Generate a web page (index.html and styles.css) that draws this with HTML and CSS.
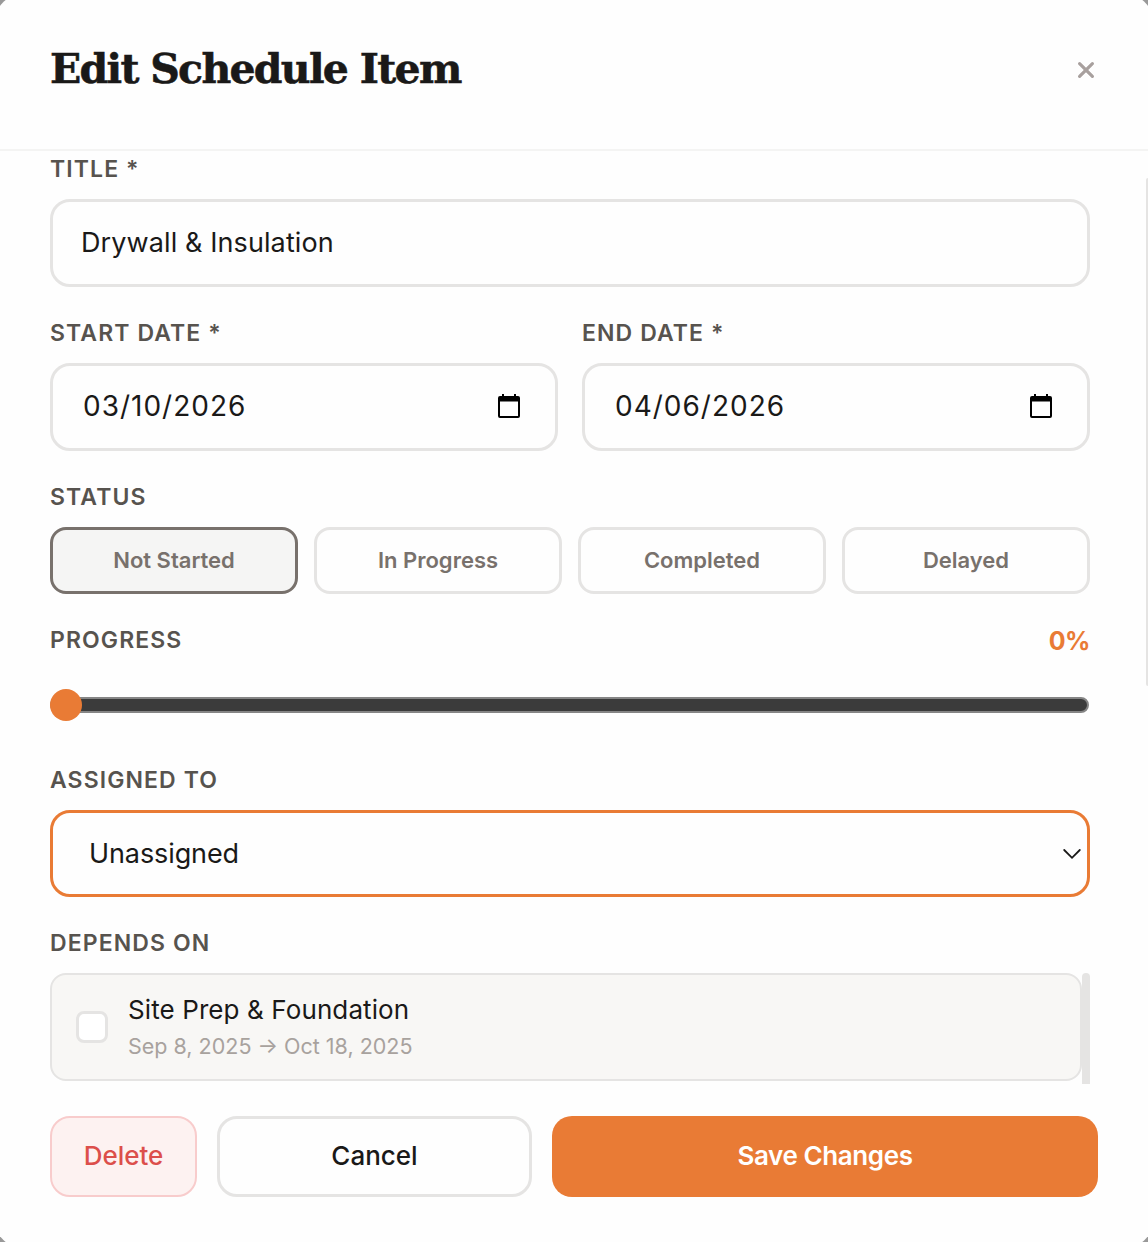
FILE: index.html
```
<!DOCTYPE html>
<html lang="en">
<head>
    <meta charset="UTF-8">
    <meta name="viewport" content="width=device-width, initial-scale=1.0">
    <title>Edit Schedule Item</title>
    <link rel="stylesheet" href="styles.css">
</head>
<body>
    <div class="modal">
        <div class="modal-header">
            <h2>Edit Schedule Item</h2>
            <button class="close-btn" aria-label="Close">
                <svg width="18" height="18" viewBox="0 0 18 18"><path d="M2.6 2.6L15.4 15.4M15.4 2.6L2.6 15.4"/></svg>
            </button>
        </div>

        <div class="modal-body">
            <div class="field">
                <label for="title">Title *</label>
                <input class="input" id="title" type="text" value="Drywall &amp; Insulation">
            </div>

            <div class="field-row">
                <div class="field">
                    <label>Start Date *</label>
                    <div class="input date">
                        <span>03/10/2026</span>
                        <svg width="22" height="24" viewBox="0 0 22 24"><path d="M4 0h2v2h10V0h2v2h2a2 2 0 0 1 2 2v18a2 2 0 0 1-2 2H2a2 2 0 0 1-2-2V4a2 2 0 0 1 2-2h2zM2 7.5V22h18V7.5z" fill-rule="evenodd"/></svg>
                    </div>
                </div>
                <div class="field">
                    <label>End Date *</label>
                    <div class="input date">
                        <span>04/06/2026</span>
                        <svg width="22" height="24" viewBox="0 0 22 24"><path d="M4 0h2v2h10V0h2v2h2a2 2 0 0 1 2 2v18a2 2 0 0 1-2 2H2a2 2 0 0 1-2-2V4a2 2 0 0 1 2-2h2zM2 7.5V22h18V7.5z" fill-rule="evenodd"/></svg>
                    </div>
                </div>
            </div>

            <div class="field">
                <label>Status</label>
                <div class="status-options">
                    <button class="status active">Not Started</button>
                    <button class="status">In Progress</button>
                    <button class="status">Completed</button>
                    <button class="status">Delayed</button>
                </div>
            </div>

            <div class="field progress">
                <div class="progress-head">
                    <label>Progress</label>
                    <span class="percent">0%</span>
                </div>
                <div class="slider">
                    <div class="track"></div>
                    <div class="thumb"></div>
                </div>
            </div>

            <div class="field">
                <label>Assigned To</label>
                <div class="input select">
                    <span>Unassigned</span>
                    <svg width="20" height="12" viewBox="0 0 20 12"><path d="M2.2 2L10 9.8L17.8 2"/></svg>
                </div>
            </div>

            <div class="field">
                <label>Depends On</label>
                <div class="depends">
                    <div class="depends-item">
                        <span class="checkbox"></span>
                        <div>
                            <div class="item-name">Site Prep &amp; Foundation</div>
                            <div class="item-dates">Sep 8, 2025 → Oct 18, 2025</div>
                        </div>
                    </div>
                    <div class="depends-scroll"></div>
                </div>
            </div>
        </div>

        <div class="modal-footer">
            <button class="btn delete">Delete</button>
            <button class="btn cancel">Cancel</button>
            <button class="btn save">Save Changes</button>
        </div>

        <div class="scrollbar"></div>
    </div>
</body>
</html>
```
FILE: styles.css
```
* {
    box-sizing: border-box;
}

body {
    margin: 0;
    height: 1242px;
    overflow: hidden;
    background: #999;
    font-family: Inter, "Liberation Sans", sans-serif;
    color: #1a1918;
}

button {
    font-family: inherit;
    padding: 0;
    cursor: pointer;
}

/* slightly larger than the window, so only the corner tips show */
.modal {
    position: relative;
    display: flex;
    flex-direction: column;
    width: calc(100% + 18px);
    height: 1260px;
    margin: -9px;
    padding: 9px;
    background: #fefefe;
    border-radius: 40px;
    overflow: hidden;
}

.modal-header {
    display: flex;
    justify-content: space-between;
    align-items: flex-start;
    height: 151px;
    padding: 42px 53px 0 50px;
    border-bottom: 2px solid #f4f4f3;
}

.modal-header h2 {
    margin: 0;
    font-family: "DejaVu Serif", serif;
    font-size: 41px;
    line-height: 55px;
    letter-spacing: -1.7px;
    -webkit-text-stroke: 0.6px #1a1918;
}

.close-btn {
    height: 18px;
    margin-top: 19px;
    background: none;
    border: none;
}

.close-btn svg {
    display: block;
    fill: none;
    stroke: #a8a09e;
    stroke-width: 3.2;
    stroke-linecap: round;
}

.modal-body {
    display: flex;
    flex-direction: column;
    gap: 31px;
    height: 933px;
    padding: 3px 58px 0 50px;
    overflow: hidden;
}

.field {
    display: flex;
    flex-direction: column;
    gap: 15px;
}

.field-row {
    display: grid;
    grid-template-columns: 1fr 1fr;
    gap: 24px;
}

label {
    font-size: 23px;
    font-weight: 600;
    line-height: 30px;
    letter-spacing: 1.1px;
    text-transform: uppercase;
    color: #57534e;
}

.input {
    display: flex;
    align-items: center;
    justify-content: space-between;
    width: 100%;
    height: 88px;
    padding: 0 28px 2px;
    border: 3px solid #e5e4e3;
    border-radius: 20px;
    background: #fefefe;
    font-family: inherit;
    font-size: 27px;
    letter-spacing: 0.1px;
    color: #1a1918;
}

.date {
    padding: 0 35px 2px 30px;
    font-size: 28px;
    letter-spacing: 1px;
}

.select {
    height: 87px;
    padding: 0 5px 0 36px;
    border-color: #e97b35;
    letter-spacing: -0.1px;
}

.select svg {
    fill: none;
    stroke: #1a1918;
    stroke-width: 1.8;
    stroke-linecap: round;
}

.status-options {
    display: grid;
    grid-template-columns: repeat(4, 1fr);
    gap: 16px;
}

.status {
    height: 67px;
    padding-bottom: 2px;
    border: 3px solid #e5e4e3;
    border-radius: 16px;
    background: #fefefe;
    font-size: 22px;
    font-weight: 600;
    color: #78716c;
}

.status.active {
    border-color: #78716c;
    background: #f5f5f4;
}

.progress {
    gap: 34px;
    margin-bottom: 13px;
}

.progress-head {
    display: flex;
    justify-content: space-between;
    height: 30px;
}

.percent {
    font-size: 25px;
    font-weight: 700;
    line-height: 32px;
    letter-spacing: -0.5px;
    color: #e97b35;
}

.slider {
    display: flex;
    align-items: center;
    position: relative;
    height: 32px;
}

.track {
    width: calc(100% - 1px);
    height: 16px;
    border: 2px solid #858585;
    border-radius: 8px;
    background: #3b3b3b;
}

.thumb {
    position: absolute;
    left: 0;
    top: 0;
    width: 32px;
    height: 32px;
    border-radius: 50%;
    background: #e97b35;
}

.depends {
    display: flex;
    height: 111px;
}

.depends-item {
    flex: 1;
    display: flex;
    align-items: center;
    gap: 20px;
    height: 108px;
    padding: 0 24px;
    border: 2px solid #e5e4e3;
    border-radius: 16px;
    background: #f8f7f5;
}

.checkbox {
    width: 32px;
    height: 32px;
    border: 3px solid #e5e4e3;
    border-radius: 8px;
    background: #fff;
}

.item-name {
    font-size: 26px;
    line-height: 38px;
    letter-spacing: 0.1px;
}

.item-dates {
    font-size: 21.5px;
    line-height: 34px;
    color: #a8a29e;
}

.depends-scroll {
    width: 8px;
    border-radius: 4px 4px 0 0;
    background: #e5e4e3;
}

.modal-footer {
    display: flex;
    gap: 20px;
    padding: 32px 50px 0;
}

.btn {
    height: 81px;
    padding-bottom: 2px;
    border-radius: 20px;
    font-size: 26px;
    font-weight: 500;
}

.delete {
    width: 147px;
    border: 2px solid #f8cccc;
    background: #fdf2f1;
    color: #dc4f4b;
}

.cancel {
    width: 315px;
    border: 3px solid #e5e4e3;
    background: #fefefe;
    color: #1a1918;
}

.save {
    flex: 1;
    border: none;
    background: #e97b35;
    font-weight: 600;
    letter-spacing: -0.4px;
    color: #fff;
}

.scrollbar {
    position: absolute;
    top: 187px;
    right: 9px;
    width: 2px;
    height: 508px;
    border-radius: 2px 0 0 2px;
    background: #e5e4e3;
}
```
